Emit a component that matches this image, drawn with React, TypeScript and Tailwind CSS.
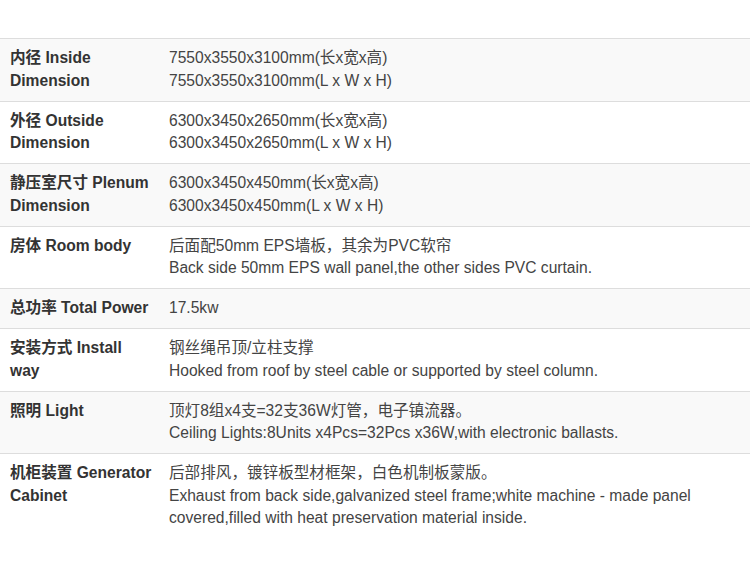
const rows: { label: string[]; value: string[] }[] = [
  {
    label: ['内径 Inside', 'Dimension'],
    value: ['7550x3550x3100mm(长x宽x高)', '7550x3550x3100mm(L x W x H)'],
  },
  {
    label: ['外径 Outside', 'Dimension'],
    value: ['6300x3450x2650mm(长x宽x高)', '6300x3450x2650mm(L x W x H)'],
  },
  {
    label: ['静压室尺寸 Plenum', 'Dimension'],
    value: ['6300x3450x450mm(长x宽x高)', '6300x3450x450mm(L x W x H)'],
  },
  {
    label: ['房体 Room body'],
    value: ['后面配50mm EPS墙板，其余为PVC软帘', 'Back side 50mm EPS wall panel,the other sides PVC curtain.'],
  },
  {
    label: ['总功率 Total Power'],
    value: ['17.5kw'],
  },
  {
    label: ['安装方式 Install', 'way'],
    value: ['钢丝绳吊顶/立柱支撑', 'Hooked from roof by steel cable or supported by steel column.'],
  },
  {
    label: ['照明 Light'],
    value: ['顶灯8组x4支=32支36W灯管，电子镇流器。', 'Ceiling Lights:8Units x4Pcs=32Pcs x36W,with electronic ballasts.'],
  },
  {
    label: ['机柜装置 Generator', 'Cabinet'],
    value: [
      '后部排风，镀锌板型材框架，白色机制板蒙版。',
      'Exhaust from back side,galvanized steel frame;white machine - made panel covered,filled with heat preservation material inside.',
    ],
  },
]

export default function App() {
  return (
    <div className="w-[750px] min-h-[578px] bg-white pt-[38px] font-['Liberation_Sans','Noto_Sans_CJK_SC',sans-serif] text-[15.6px] leading-[22.5px]">
      <table className="w-full border-collapse">
        <tbody>
          {rows.map(({ label, value }, i) => (
            <tr key={i} className={i % 2 === 0 ? 'bg-[#f9f9f9]' : 'bg-white'}>
              <td className="w-[160px] border-t border-[#dddddd] pl-[10px] pr-2 py-[8.25px] align-top font-bold text-[#333333]">
                {label.map((l, j) => (
                  <div key={j}>{l}</div>
                ))}
              </td>
              <td className="border-t border-[#dddddd] pl-[9px] pr-[50px] py-[8.25px] align-top text-[#444444]">
                {value.map((v, j) => (
                  <div key={j}>{v}</div>
                ))}
              </td>
            </tr>
          ))}
        </tbody>
      </table>
    </div>
  )
}
